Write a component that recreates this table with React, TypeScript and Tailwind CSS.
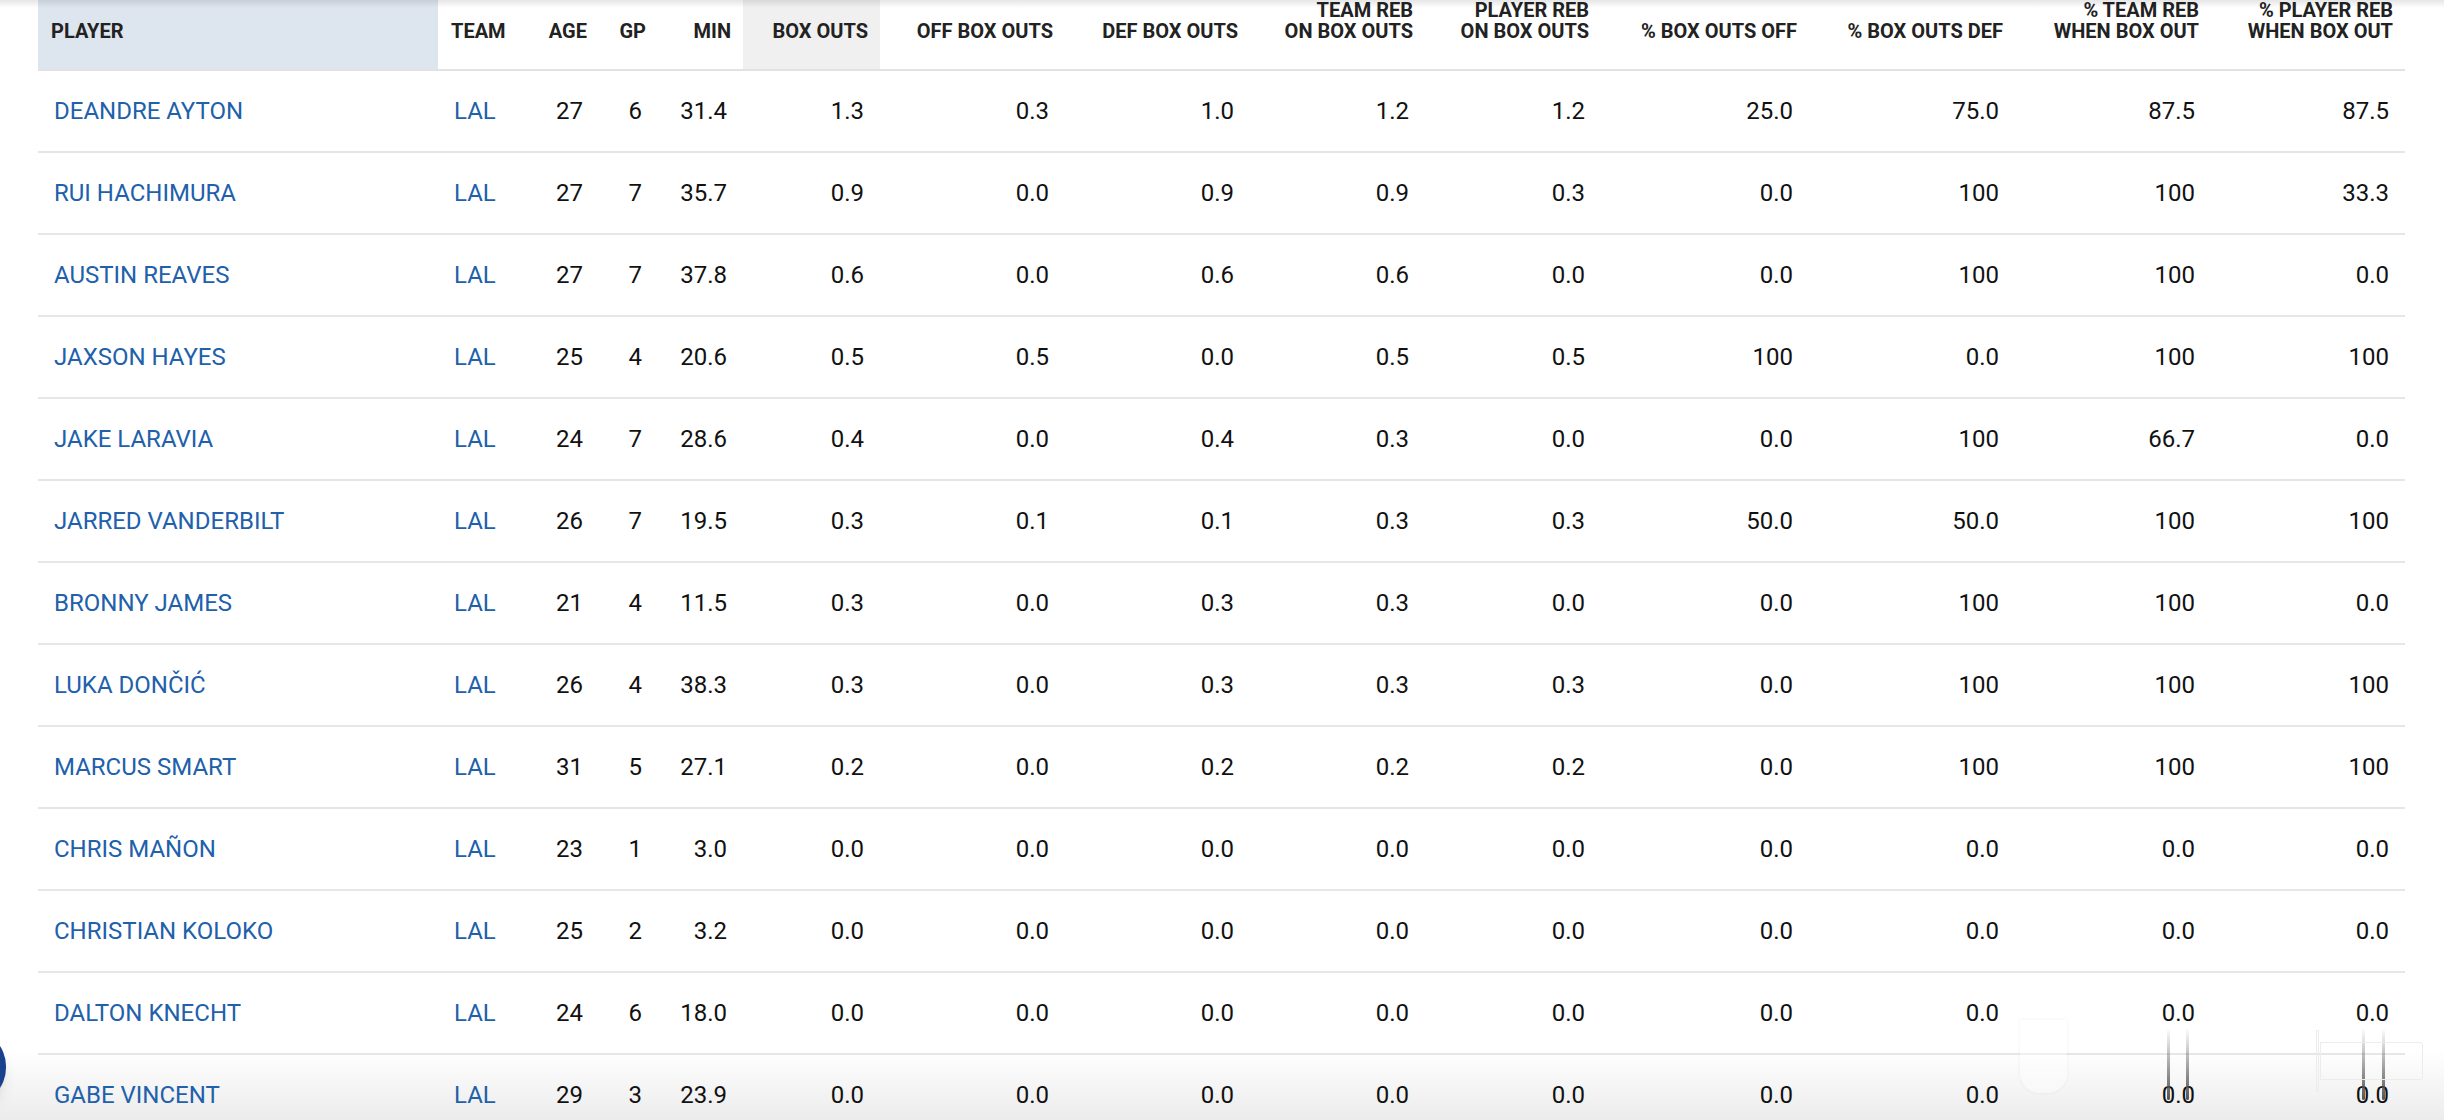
import React from 'react';

type Row = [string, number, number, string, ...string[]];

const zeros = ['0.0', '0.0', '0.0', '0.0', '0.0', '0.0', '0.0', '0.0', '0.0'];

const rows: Row[] = [
    ['DEANDRE AYTON', 27, 6, '31.4', '1.3', '0.3', '1.0', '1.2', '1.2', '25.0', '75.0', '87.5', '87.5'],
    ['RUI HACHIMURA', 27, 7, '35.7', '0.9', '0.0', '0.9', '0.9', '0.3', '0.0', '100', '100', '33.3'],
    ['AUSTIN REAVES', 27, 7, '37.8', '0.6', '0.0', '0.6', '0.6', '0.0', '0.0', '100', '100', '0.0'],
    ['JAXSON HAYES', 25, 4, '20.6', '0.5', '0.5', '0.0', '0.5', '0.5', '100', '0.0', '100', '100'],
    ['JAKE LARAVIA', 24, 7, '28.6', '0.4', '0.0', '0.4', '0.3', '0.0', '0.0', '100', '66.7', '0.0'],
    ['JARRED VANDERBILT', 26, 7, '19.5', '0.3', '0.1', '0.1', '0.3', '0.3', '50.0', '50.0', '100', '100'],
    ['BRONNY JAMES', 21, 4, '11.5', '0.3', '0.0', '0.3', '0.3', '0.0', '0.0', '100', '100', '0.0'],
    ['LUKA DONČIĆ', 26, 4, '38.3', '0.3', '0.0', '0.3', '0.3', '0.3', '0.0', '100', '100', '100'],
    ['MARCUS SMART', 31, 5, '27.1', '0.2', '0.0', '0.2', '0.2', '0.2', '0.0', '100', '100', '100'],
    ['CHRIS MAÑON', 23, 1, '3.0', ...zeros],
    ['CHRISTIAN KOLOKO', 25, 2, '3.2', ...zeros],
    ['DALTON KNECHT', 24, 6, '18.0', ...zeros],
    ['GABE VINCENT', 29, 3, '23.9', ...zeros],
];

const statHeaders: React.ReactNode[] = [
    'BOX OUTS',
    'OFF BOX OUTS',
    'DEF BOX OUTS',
    <>TEAM REB<br />ON BOX OUTS</>,
    <>PLAYER REB<br />ON BOX OUTS</>,
    '% BOX OUTS OFF',
    '% BOX OUTS DEF',
    <>% TEAM REB<br />WHEN BOX OUT</>,
    <>% PLAYER REB<br />WHEN BOX OUT</>,
];

const th = 'h-[67px] align-bottom pb-[27px] text-[20px] leading-[21px] font-bold text-[#222] border-b-2 border-[#e2e2e2] whitespace-nowrap';
const td = 'h-[82px] text-[24px] text-[#111] border-b-2 border-[#e6e6e6] whitespace-nowrap';

const App: React.FC = () => {
    return (
        <div className="relative h-[1120px] w-full overflow-hidden bg-white font-['Roboto',sans-serif]">
            {/* bottom nav fade, sits behind the table */}
            <div className="pointer-events-none absolute inset-x-0 bottom-0 h-[70px] bg-gradient-to-b from-white to-[#ececec]" />

            <div className="relative pl-[38px]">
                <table className="table-fixed border-collapse w-[2367px]">
                    <colgroup>
                        <col className="w-[400px]" />
                        <col className="w-[82px]" />
                        <col className="w-[79px]" />
                        <col className="w-[59px]" />
                        <col className="w-[85px]" />
                        <col className="w-[137px]" />
                        <col className="w-[185px]" />
                        <col className="w-[185px]" />
                        <col className="w-[175px]" />
                        <col className="w-[176px]" />
                        <col className="w-[208px]" />
                        <col className="w-[206px]" />
                        <col className="w-[196px]" />
                        <col className="w-[194px]" />
                    </colgroup>
                    <thead>
                        <tr>
                            <th className={`${th} text-left pl-[13px] bg-[#dde5ef] text-[#111]`}>PLAYER</th>
                            <th className={`${th} text-left pl-[13px]`}>TEAM</th>
                            <th className={`${th} text-right pr-[12px]`}>AGE</th>
                            <th className={`${th} text-right pr-[12px]`}>GP</th>
                            <th className={`${th} text-right pr-[12px]`}>MIN</th>
                            {statHeaders.map((h, i) => (
                                <th key={i} className={`${th} text-right pr-[12px] ${i === 0 ? 'bg-[#f0f0f0]' : ''}`}>{h}</th>
                            ))}
                        </tr>
                    </thead>
                    <tbody>
                        {rows.map(([name, age, gp, min, ...stats]) => (
                            <tr key={name}>
                                <td className={`${td} pl-[16px] text-[#2160aa]`}>{name}</td>
                                <td className={`${td} pl-[16px] text-[#2160aa]`}>LAL</td>
                                <td className={`${td} text-right pr-[16px]`}>{age}</td>
                                <td className={`${td} text-right pr-[16px]`}>{gp}</td>
                                <td className={`${td} text-right pr-[16px]`}>{min}</td>
                                {stats.map((s, i) => (
                                    <td key={i} className={`${td} text-right pr-[16px]`}>{s}</td>
                                ))}
                            </tr>
                        ))}
                    </tbody>
                </table>
            </div>

            {/* top scroll shadow */}
            <div className="pointer-events-none absolute inset-x-0 top-0 h-[8px] bg-gradient-to-b from-black/10 to-transparent" />

            {/* floating button, mostly off screen */}
            <div className="absolute left-[-66px] top-[1030px] h-[74px] w-[72px] rounded-full bg-gradient-to-r from-[#2a5bb0] to-[#183f8c] shadow-lg" />

            {/* ghost artifacts at bottom right */}
            <div className="pointer-events-none absolute left-[2020px] top-[1020px] h-[73px] w-[47px] rounded-b-[20px] bg-white/40 shadow-[0_0_4px_rgba(0,0,0,0.05)]" />
            <div className="pointer-events-none absolute left-[2167px] top-[1028px] h-[72px] w-[3px] rounded-full bg-gradient-to-b from-transparent to-[#555]" />
            <div className="pointer-events-none absolute left-[2186px] top-[1028px] h-[72px] w-[3px] rounded-full bg-gradient-to-b from-transparent to-[#555]" />
            <div className="pointer-events-none absolute left-[2362px] top-[1028px] h-[72px] w-[3px] rounded-full bg-gradient-to-b from-transparent to-[#555]" />
            <div className="pointer-events-none absolute left-[2382px] top-[1028px] h-[72px] w-[3px] rounded-full bg-gradient-to-b from-transparent to-[#555]" />
            <div className="pointer-events-none absolute left-[2316px] top-[1030px] h-[62px] w-[3px] border border-[#ececec]" />
            <div className="pointer-events-none absolute left-[2320px] top-[1042px] h-[38px] w-[103px] rounded-r-[3px] border border-[#ececec]" />
        </div>
    );
};

export default App;
